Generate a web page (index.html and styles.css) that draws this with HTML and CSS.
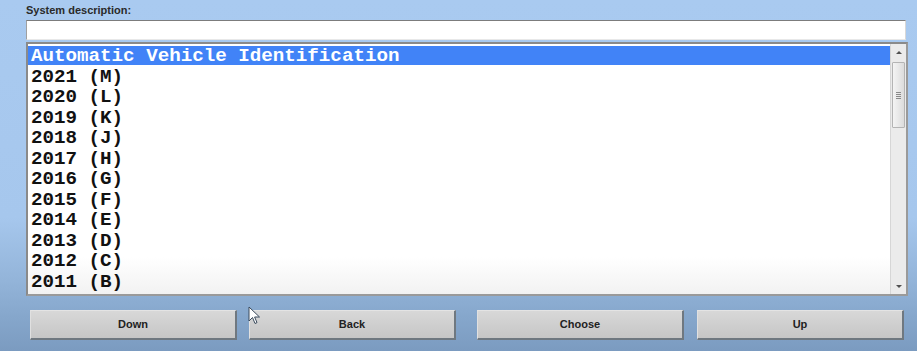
FILE: index.html
```html
<!DOCTYPE html>
<html>
<head>
<meta charset="utf-8">
<link rel="stylesheet" href="styles.css">
</head>
<body>
<div class="app">
  <div class="label">System description:</div>
  <div class="input"></div>
  <div class="list">
    <div class="items">
      <div class="row selected">Automatic Vehicle Identification</div>
      <div class="row">2021 (M)</div>
      <div class="row">2020 (L)</div>
      <div class="row">2019 (K)</div>
      <div class="row">2018 (J)</div>
      <div class="row">2017 (H)</div>
      <div class="row">2016 (G)</div>
      <div class="row">2015 (F)</div>
      <div class="row">2014 (E)</div>
      <div class="row">2013 (D)</div>
      <div class="row">2012 (C)</div>
      <div class="row">2011 (B)</div>
    </div>
    <div class="scrollbar">
      <div class="arrow up"></div>
      <div class="track">
        <div class="thumb"><span class="grip"></span></div>
      </div>
      <div class="arrow down"></div>
    </div>
  </div>
  <div class="buttons">
    <div class="btn">Down</div>
    <div class="btn">Back</div>
    <div class="btn choose">Choose</div>
    <div class="btn">Up</div>
  </div>
</div>
<svg class="cursor" width="14" height="20" viewBox="0 0 14 20">
  <path d="M1 1 L1 15 L4.5 11.5 L7 17.5 L9 16.6 L6.6 11 L11.5 11 Z" fill="#ffffff" stroke="#3a4a5c" stroke-width="1" stroke-linejoin="round"/>
</svg>
</body>
</html>
```
FILE: styles.css
```css
html, body {
  margin: 0;
  padding: 0;
}
body {
  width: 917px;
  height: 351px;
  overflow: hidden;
  position: relative;
  background: linear-gradient(to bottom, #a9caf0 0%, #a6c7ed 62%, #93b4d9 80%, #86a7cc 90%, #7b9bc0 100%);
  font-family: "Liberation Sans", Arial, sans-serif;
}
.app {
  display: flex;
  flex-direction: column;
  padding: 4px 0 0 26px;
}
.label {
  font-size: 11px;
  font-weight: bold;
  color: #2a2a2a;
  height: 16px;
  line-height: 12px;
}
.input {
  width: 878px;
  height: 18px;
  background: #ffffff;
  border-top: 1px solid #7c7c7c;
  border-left: 1px solid #a0a0a0;
  border-right: 1px solid #d8d8d8;
  border-bottom: 1px solid #e8e8e8;
}
.list {
  margin-top: 2px;
  width: 878px;
  height: 250px;
  display: flex;
  background: linear-gradient(to bottom, #ffffff 85%, #f2f2f2 100%);
  border-top: 2px solid #8a8a8a;
  border-left: 2px solid #8a8a8a;
  border-right: 2px solid #9a9a9a;
  border-bottom: 2px solid #9a9a9a;
}
.items {
  flex: 1;
  padding-top: 2px;
  overflow: hidden;
}
.row {
  height: 20.5px;
  line-height: 20.5px;
  padding-left: 3px;
  font-family: "Liberation Mono", "Courier New", monospace;
  font-weight: bold;
  font-size: 19.2px;
  color: #111111;
  white-space: pre;
}
.row.selected {
  background: #4183f7;
  color: #ffffff;
  height: 19px;
  line-height: 20px;
  margin-bottom: 1.5px;
}
.scrollbar {
  width: 15px;
  display: flex;
  flex-direction: column;
  background: #ebebeb;
  border-left: 1px solid #d6d6d6;
}
.arrow {
  height: 16px;
  display: flex;
  align-items: center;
  justify-content: center;
}
.arrow::before {
  content: "";
  width: 0;
  height: 0;
  border-left: 3px solid transparent;
  border-right: 3px solid transparent;
}
.arrow.up::before {
  border-bottom: 3px solid #505050;
}
.arrow.down::before {
  border-top: 3px solid #505050;
}
.track {
  flex: 1;
  padding-top: 2px;
}
.thumb {
  height: 64px;
  margin: 0 1px;
  background: linear-gradient(to right, #f4f4f4, #dcdcdc);
  border: 1px solid #b4b4b4;
  border-radius: 1px;
  display: flex;
  align-items: center;
  justify-content: center;
}
.grip {
  width: 5px;
  height: 7px;
  background: repeating-linear-gradient(to bottom, #8a8a8a 0, #8a8a8a 1px, transparent 1px, transparent 2px);
}
.buttons {
  margin-top: 14px;
  margin-left: 4px;
  display: flex;
  gap: 12px;
}
.btn {
  width: 204px;
  height: 27px;
  line-height: 27px;
  text-align: center;
  font-size: 11px;
  font-weight: bold;
  color: #222222;
  background: linear-gradient(to bottom, #d8d8d8, #c6c6c6);
  border-top: 1px solid #e4e4e4;
  border-left: 1px solid #e0e0e0;
  border-right: 2px solid #6f7880;
  border-bottom: 2px solid #6f7880;
}
.btn.choose {
  margin-left: 9px;
  margin-right: 1px;
}
.cursor {
  position: absolute;
  left: 248px;
  top: 306px;
}
```
